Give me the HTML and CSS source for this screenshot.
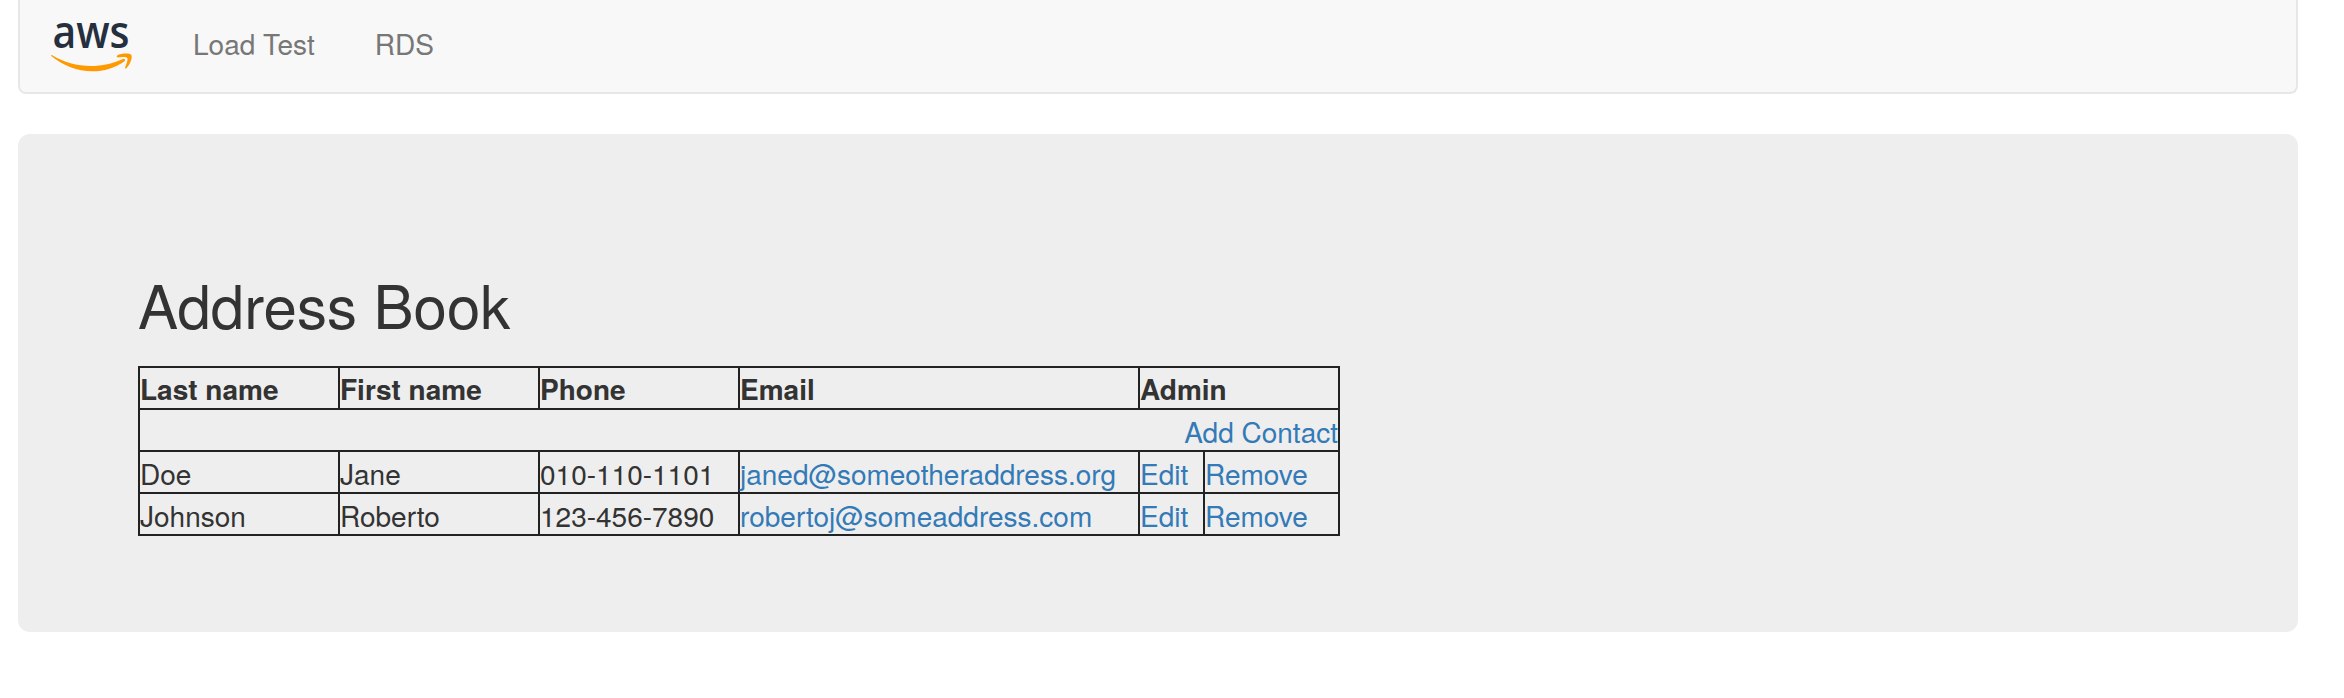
FILE: index.html
```html
<!DOCTYPE html>
<html lang="en">
<head>
<meta charset="utf-8">
<title>Address Book</title>
<link rel="stylesheet" href="styles.css">
</head>
<body>
<nav class="navbar">
  <a class="brand" href="#">
    <svg class="logo" width="84" height="52" viewBox="0 0 84 52" role="img" aria-label="aws">
      <text class="logo-text" x="1.5" y="27" textLength="77" lengthAdjust="spacingAndGlyphs">aws</text>
      <path fill="#ff9900" d="M1.2 34.2C12.5 41 26 45 40 45C51 45 62 42.5 72 38C73.6 37.2 75 39 73.5 40.2C65 46.8 52.5 50.3 41.5 50.3C26 50.3 12 44.5 0.6 35.3C-.2 34.5 .3 33.7 1.2 34.2Z"/>
      <path fill="#ff9900" d="M66.2 34.6C70 32.2 78.5 32 80.2 33.8C81.8 35.8 79.5 43.5 75.4 47.2C74.5 47.9 73.7 47.5 74.1 46.5C75.2 43.8 77.3 38.5 76.3 37C75.2 35.500 69.8 36.2 67 36.4C65.5 36.5 65.2 35.3 66.2 34.6Z"/>
    </svg>
  </a>
  <a class="nav-link" href="#">Load Test</a>
  <a class="nav-link" href="#">RDS</a>
</nav>
<main class="jumbotron">
  <h1 class="title">Address Book</h1>
  <table class="contacts">
    <colgroup>
      <col class="col-name"><col class="col-name"><col class="col-name">
      <col class="col-email"><col class="col-edit"><col class="col-remove">
    </colgroup>
    <tr><th>Last name</th><th>First name</th><th>Phone</th><th>Email</th><th colspan="2">Admin</th></tr>
    <tr><td class="add" colspan="6"><a href="#">Add Contact</a></td></tr>
    <tr><td>Doe</td><td>Jane</td><td>010-110-1101</td><td><a href="#">janed@someotheraddress.org</a></td><td><a href="#">Edit</a></td><td><a href="#">Remove</a></td></tr>
    <tr><td>Johnson</td><td>Roberto</td><td>123-456-7890</td><td><a href="#">robertoj@someaddress.com</a></td><td><a href="#">Edit</a></td><td><a href="#">Remove</a></td></tr>
  </table>
</main>
</body>
</html>
```
FILE: styles.css
```css
* { box-sizing: border-box; }
body {
  margin: 0;
  padding: 0 46px 0 18px;
  background: #fff;
  color: #333;
  font-family: "TeX Gyre Heros", "Liberation Sans", Arial, sans-serif;
  font-size: 28px;
}
a { color: #337ab7; text-decoration: none; }
.navbar {
  display: flex;
  align-items: flex-start;
  height: 94px;
  margin-bottom: 40px;
  padding-left: 31px;
  background: #f8f8f8;
  border: 2px solid #e7e7e7;
  border-top: 0;
  border-radius: 0 0 8px 8px;
}
.brand { padding-top: 21px; margin-right: 58px; }
.logo { display: block; overflow: visible; }
.logo-text {
  font-family: "Open Sans", "Noto Sans", sans-serif;
  font-size: 45px;
  font-weight: 600;
  fill: #252f3e;
}
.nav-link {
  padding-top: 23px;
  margin-right: 60px;
  line-height: 40px;
  color: #777;
}
.jumbotron {
  height: 498px;
  padding: 136px 120px 0;
  background: #eee;
  border-radius: 12px;
}
.title {
  margin: 0 0 30px;
  font-size: 60px;
  font-weight: 400;
  line-height: 66px;
}
.contacts {
  width: 1202px;
  table-layout: fixed;
  border-collapse: collapse;
}
.col-name { width: 200px; }
.col-email { width: 400px; }
.col-edit { width: 65px; }
.col-remove { width: 135px; }
.contacts th, .contacts td {
  height: 42px;
  padding: 2px 0 0;
  border: 2px solid #222;
  line-height: 38px;
  text-align: left;
  vertical-align: top;
  white-space: nowrap;
}
.contacts th { font-weight: 700; }
.contacts .add { text-align: right; }
```
